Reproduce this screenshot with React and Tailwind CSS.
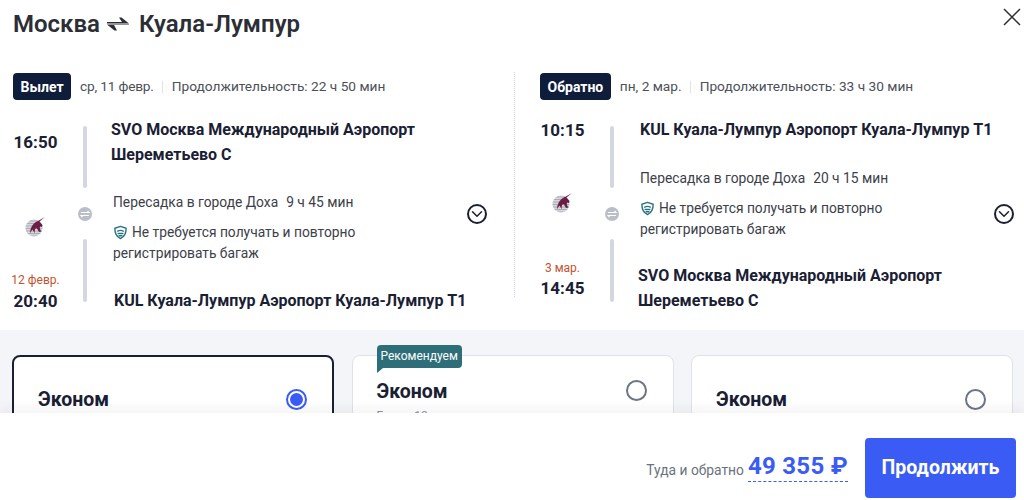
import { ChevronDown } from 'lucide-react';

const font = "font-['Roboto','Liberation_Sans',sans-serif]";

const QatarLogo = ({ className }) => (
  <svg viewBox="0 0 22 22" className={className}>
    <defs>
      <clipPath id="disc"><circle cx="9" cy="12" r="8.5" /></clipPath>
    </defs>
    <circle cx="9" cy="12" r="8.5" fill="#d5d7db" />
    <g clipPath="url(#disc)" stroke="#a9adb4" strokeWidth="1">
      <path d="M0 5h22M0 7.500h22M0 10h22M0 12.500h22M0 15h22M0 17.500h22M0 20h22" />
    </g>
    <path
      d="M20 1 13 5C10 6 7.500 8.500 6.500 11 5.500 13 5 15 5 17l2.500-3.500L9.500 17l.5-4c1-1 1.500-1 2-.5l2 3.500 2.500-.5c-1.500-1.500-2-3.500-1.500-5l2 .5.500-2-3-3.500z"
      fill="#6b1d45"
    />
  </svg>
);

const ShieldIcon = () => (
  <svg viewBox="0 0 16 16" className="w-[15px] h-[15px] shrink-0" fill="none" stroke="#2e7480" strokeWidth="1.5">
    <path d="M8 1.500 14 3.500c.2 5-1.500 8.800-6 11-4.500-2.200-6.200-6-6-11z" strokeLinejoin="round" />
    <path d="M5 6.500c2-1 4-1 6 0M5.500 9h5M6.500 11.500h3" strokeLinecap="round" />
  </svg>
);

const SwapIcon = () => (
  <svg viewBox="0 0 24 14" className="w-6 h-3.5 ml-[6px] mr-[9px] shrink-0" fill="#2b2e35">
    <path d="M1 5h15l-3-4.500h2.500L23 6.500H1zM23 8H8l3 5.500H8.500L1 7.500h22z" />
  </svg>
);

const TransferDot = () => (
  <div className="w-3.5 h-3.5 mt-[19px] mb-[18px] rounded-full bg-[#b9bec8] flex items-center justify-center">
    <svg viewBox="0 0 10 8" className="w-2.5 h-2" fill="none" stroke="#fff" strokeWidth="1.1">
      <path d="M1 2.500h8L7.500 1M9 5.500H1L2.500 7" />
    </svg>
  </div>
);

const Bar = ({ className }) => <div className={`w-1 rounded-full bg-[#d3d7e0] ${className}`} />;

const Transfer = ({ city, time, className }) => (
  <div className={`text-[13.8px] text-[#3c4049] leading-[21px] font-normal ${className}`}>
    <div>
      Пересадка в городе {city}
      <span className="ml-2">{time}</span>
    </div>
    <div className="mt-[9px] flex items-center gap-1">
      <ShieldIcon />
      <span>Не требуется получать и повторно</span>
    </div>
    <div>регистрировать багаж</div>
  </div>
);

const Head = ({ label, date, duration, dateClass }) => (
  <div className="flex items-center h-[27px] text-[13.7px] text-[#4c5059]">
    <span className="h-[27px] px-[7.5px] rounded bg-[#0f1d3a] text-white text-sm font-bold flex items-center">{label}</span>
    <span className={`ml-[9px] ${dateClass}`}>{date}</span>
    <span className="ml-2 mr-[9px] w-px h-3 bg-[#dfe2e8]" />
    <span>{duration}</span>
  </div>
);

const Chevron = () => (
  <div className="w-5 h-5 mt-[87px] rounded-full border-2 border-[#1a2033] flex items-center justify-center shrink-0">
    <ChevronDown className="w-[18px] h-[18px] shrink-0 text-[#1a2033]" strokeWidth={2} />
  </div>
);

const Card = ({ selected, tag, titleClass, radioClass }) => (
  <div
    className={`relative w-[322px] h-[120px] shrink-0 rounded-lg bg-white pl-[24px] flex items-start justify-between ${
      selected ? 'border-2 border-[#1a2033] pr-[25px]' : 'border border-[#dfe2e8] pr-[26px]'
    }`}
  >
    {tag && (
      <div className="absolute left-[24px] -top-[11px]">
        <div className="h-[23px] px-1 rounded-t-sm rounded-br-sm bg-[#2e6e78] text-white text-xs leading-[23px]">Рекомендуем</div>
        <div className="w-0 h-0 border-t-[5px] border-r-[6px] border-t-[#2e6e78] border-r-transparent" />
      </div>
    )}
    <div className={titleClass}>
      <div className="text-[19.5px] font-bold leading-6 text-[#1a2033]">Эконом</div>
      {tag && <div className="mt-1 text-xs text-[#8b909a]">Багаж 10 кг</div>}
    </div>
    {selected ? (
      <div className={`w-[21px] h-[21px] rounded-full border-2 border-[#3a5cf5] flex items-center justify-center ${radioClass}`}>
        <span className="w-[13px] h-[13px] rounded-full bg-[#3a5cf5]" />
      </div>
    ) : (
      <div className={`w-[21px] h-[21px] rounded-full border-2 border-[#6d7482] ${radioClass}`} />
    )}
  </div>
);

export default function App() {
  return (
    <div className={`w-[1024px] h-[500px] overflow-hidden bg-white flex flex-col ${font}`}>
      <div className="h-[330px] shrink-0">
        <div className="flex justify-between pl-[13px] pr-[3px] h-[72px]">
          <div className="flex items-center h-[48px] text-2xl font-semibold text-[#2b2e35]">
            <span>Москва</span>
            <SwapIcon />
            <span>Куала-Лумпур</span>
          </div>
          <svg viewBox="0 0 18 18" className="w-[18px] h-[18px] mt-[8px]" fill="none" stroke="#2b2e35" strokeWidth="1.5">
            <path d="M1 1l16 16M17 1 1 17" />
          </svg>
        </div>

        <div className="flex">
          <div className="w-[514px] pl-[13px] pt-px">
            <Head label="Вылет" date="ср, 11 февр." dateClass="tracking-[-0.2px]" duration="Продолжительность: 22 ч 50 мин" />
            <div className="flex mt-[17px]">
              <div className="w-[65px] h-[190px]">
                <div className="w-[45px] flex flex-col items-center">
                  <span className="mt-[15px] text-[17px] font-bold leading-5 text-[#1a2033]">16:50</span>
                  <QatarLogo className="w-[22px] h-[22px] mt-[64px]" />
                  <span className="mt-[34px] text-xs leading-4 text-[#c2532d] whitespace-nowrap">12 февр.</span>
                  <span className="mt-[3px] text-[17px] font-bold leading-5 text-[#1a2033]">20:40</span>
                </div>
              </div>
              <div className="w-3.5 flex flex-col items-center pt-[9px]">
                <Bar className="h-[62px]" />
                <TransferDot />
                <Bar className="h-[63px]" />
              </div>
              <div className="w-[356px] ml-[19px] font-bold">
                <div className="text-base leading-[25px] text-[#1a2033]">
                  SVO Москва Международный Аэропорт
                  <br />
                  Шереметьево C
                </div>
                <Transfer city="Доха" time="9 ч 45 мин" className="ml-[2px] mt-[25px]" />
                <div className="ml-[3px] mt-[24px] text-base leading-[25px] text-[#1a2033] whitespace-nowrap">
                  KUL Куала-Лумпур Аэропорт Куала-Лумпур T1
                </div>
              </div>
              <Chevron />
            </div>
          </div>

          <div className="w-0 h-[225px] border-l border-dotted border-[#d6d6ea]" />

          <div className="pl-[25px] pt-px">
            <Head label="Обратно" date="пн, 2 мар." duration="Продолжительность: 33 ч 30 мин" />
            <div className="flex mt-[17px]">
              <div className="w-[65px] h-[190px]">
                <div className="w-[45px] flex flex-col items-center">
                  <span className="mt-[3px] text-[17px] font-bold leading-5 text-[#1a2033]">10:15</span>
                  <QatarLogo className="w-[22px] h-[22px] mt-[52px]" />
                  <span className="mt-[46px] text-xs leading-4 text-[#c2532d] whitespace-nowrap">3 мар.</span>
                  <span className="mt-[2px] text-[17px] font-bold leading-5 text-[#1a2033]">14:45</span>
                </div>
              </div>
              <div className="w-3.5 flex flex-col items-center pt-[9px]">
                <Bar className="h-[62px]" />
                <TransferDot />
                <Bar className="h-[63px]" />
              </div>
              <div className="w-[356px] ml-[19px] font-bold">
                <div className="ml-[2px] text-base leading-[25px] text-[#1a2033] whitespace-nowrap">
                  KUL Куала-Лумпур Аэропорт Куала-Лумпур T1
                </div>
                <Transfer city="Доха" time="20 ч 15 мин" className="ml-[2px] mt-[26px]" />
                <div className="mt-[23px] text-base leading-[25px] text-[#1a2033]">
                  SVO Москва Международный Аэропорт
                  <br />
                  Шереметьево C
                </div>
              </div>
              <Chevron />
            </div>
          </div>
        </div>
      </div>

      <div className="h-[83px] shrink-0 bg-[#f4f5f8] pt-[25px] px-[12px] flex gap-[17.5px] overflow-hidden">
        <Card selected titleClass="mt-[31px]" radioClass="mt-[32px]" />
        <Card tag titleClass="mt-6" radioClass="mt-[24px]" />
        <Card titleClass="mt-[32px]" radioClass="mt-[33px]" />
      </div>

      <div className="relative z-10 flex-1 bg-white flex items-end justify-end pr-[8px] pb-[2px] shadow-[0_-5px_10px_rgba(30,40,60,0.05)]">
        <div className="flex items-center mb-[16px] mr-[17px]">
          <span className="text-[13.8px] text-[#6b7280] mt-[8px] mr-[4px]">Туда и обратно</span>
          <span className="text-2xl font-bold leading-[30px] tracking-[0.3px] text-[#3a5cf5] border-b border-dashed border-[#3a5cf5]">49 355 ₽</span>
        </div>
        <button className="w-[151px] h-[60px] rounded bg-[#3a5cf5] text-white text-[19.5px] font-bold">Продолжить</button>
      </div>
    </div>
  );
}
